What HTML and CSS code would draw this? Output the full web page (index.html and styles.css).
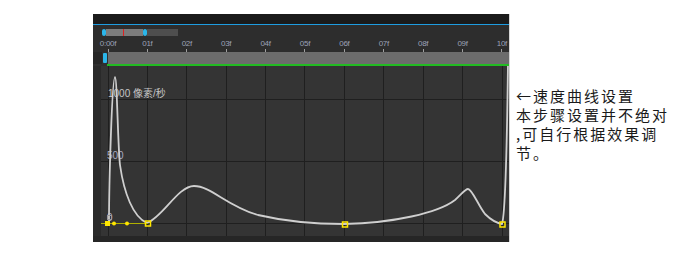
FILE: index.html
```html
<!DOCTYPE html>
<html lang="zh-CN">
<head>
    <meta charset="UTF-8">
    <title>速度曲线设置</title>
    <link rel="stylesheet" href="styles.css">
</head>
<body>

<div class="page">
    <div class="panel">
        <div class="topbar"></div>
        <div class="ruler">
            <div class="mini-scroll">
                <span class="handle"></span>
                <span class="range"><i class="playhead"></i></span>
                <span class="handle"></span>
                <span class="rest"></span>
            </div>
            <ul class="frames">
                <li>0:00f</li>
                <li>01f</li>
                <li>02f</li>
                <li>03f</li>
                <li>04f</li>
                <li>05f</li>
                <li>06f</li>
                <li>07f</li>
                <li>08f</li>
                <li>09f</li>
                <li>10f</li>
            </ul>
        </div>
        <div class="track">
            <span class="track-left"></span>
            <span class="track-handle"></span>
            <span class="track-bar"></span>
        </div>
        <div class="green-line"></div>
        <svg class="graph" width="416" height="170" viewBox="0 0 416 170">
            <rect x="0" y="0" width="8" height="170" fill="#2a2a2a"/>
            <g transform="translate(0 -1)">
                <g stroke="#1f1f1f" stroke-width="1">
                    <line x1="8" y1="34.5" x2="416" y2="34.5"/>
                    <line x1="8" y1="96.5" x2="416" y2="96.5"/>
                    <line x1="8" y1="158.5" x2="416" y2="158.5"/>
                    <line x1="15.5" y1="0" x2="15.5" y2="171"/>
                    <line x1="54.5" y1="0" x2="54.5" y2="171"/>
                    <line x1="93.5" y1="0" x2="93.5" y2="171"/>
                    <line x1="133.5" y1="0" x2="133.5" y2="171"/>
                    <line x1="172.5" y1="0" x2="172.5" y2="171"/>
                    <line x1="211.5" y1="0" x2="211.5" y2="171"/>
                    <line x1="251.5" y1="0" x2="251.5" y2="171"/>
                    <line x1="290.5" y1="0" x2="290.5" y2="171"/>
                    <line x1="330.5" y1="0" x2="330.5" y2="171"/>
                    <line x1="369.5" y1="0" x2="369.5" y2="171"/>
                    <line x1="409.5" y1="0" x2="409.5" y2="171"/>
                </g>
                <text class="axis-label" x="15" y="32">1000 像素/秒</text>
                <text class="axis-label dim" x="14" y="94">500</text>
                <text class="axis-label dim" x="14" y="156">0</text>

                <!-- speed curve -->
                <path d="M 16 157 C 16 120, 19 12, 22 12 C 24 12, 25 85, 27 100 C 31 128, 40 152, 54 158
                         C 70 152, 85 121, 101 121 C 118 121, 135 142, 165 150 C 195 157, 230 159, 251 159
                         C 300 158, 345 148, 362 135 C 368 130, 372 124, 375 124 C 379 124, 385 140, 392 149
                         C 398 155, 404 158, 409 159 C 412 150, 414 80, 415 -2"
                      fill="none" stroke="#cfcfcf" stroke-width="1.8"/>

                <!-- keyframes -->
                <line x1="8" y1="158.5" x2="55" y2="158.5" stroke="#b0b000" stroke-width="1"/>
                <rect x="14.5" y="150.5" width="4" height="4" fill="none" stroke="#9a9a9a" stroke-width="1"/>
                <rect x="12" y="156" width="5" height="5" fill="#ffe600"/>
                <circle cx="21" cy="158.5" r="2" fill="#ffe600"/>
                <circle cx="34" cy="158.5" r="2" fill="#ffe600"/>
                <rect x="52.5" y="156" width="5" height="5" fill="none" stroke="#ffe600" stroke-width="1.5"/>
                <rect x="249.5" y="157" width="5" height="5" fill="none" stroke="#ffe600" stroke-width="1.5"/>
                <rect x="407" y="157" width="5" height="5" fill="none" stroke="#ffe600" stroke-width="1.5"/>
            </g>
        </svg>
        <div class="bottombar"></div>
    </div>

    <div class="note">
        <p>←速度曲线设置</p>
        <p>本步骤设置并不绝对</p>
        <p>,可自行根据效果调</p>
        <p>节。</p>
    </div>
</div>

</body>
</html>
```

FILE: styles.css
```css
html, body, div, ul, li, p, span {
    margin: 0;
    padding: 0;
}
body {
    background-color: #ffffff;
    font-family: "Liberation Sans", "Noto Sans CJK SC", sans-serif;
}
.page {
    display: flex;
    align-items: flex-start;
    padding: 14px 0 0 93px;
}
.panel {
    width: 416px;
    display: flex;
    flex-direction: column;
    background-color: #2f2f2f;
    border-right: 1px solid #d6d6d6;
}
.topbar {
    height: 10px;
    background-color: #1b1b1b;
    border-bottom: 1px solid #1e9ce0;
}
.ruler {
    height: 27px;
    padding-top: 4px;
    box-sizing: border-box;
    background-color: #2d2d2d;
}
.mini-scroll {
    display: flex;
    width: 76px;
    height: 7px;
    margin-left: 9px;
}
.mini-scroll .handle {
    width: 4px;
    background-color: #2bb6ea;
    border-radius: 2px;
}
.mini-scroll .range {
    width: 37px;
    background-color: #7c7c7c;
    position: relative;
}
.mini-scroll .playhead {
    position: absolute;
    left: 17px;
    top: 0;
    width: 1px;
    height: 7px;
    background-color: #e02020;
}
.mini-scroll .rest {
    flex: 1;
    background-color: #4e4e4e;
}
ul.frames {
    list-style-type: none;
    display: flex;
    margin: 3px 0 0 -4.7px;
}
.frames>li {
    flex: none;
    width: 39.4px;
    text-align: center;
    font-size: 8px;
    line-height: 9px;
    color: #9ca1b6;
    letter-spacing: -0.3px;
}
.frames>li::after {
    content: "";
    display: block;
    width: 1px;
    height: 3px;
    margin: 1px auto 0;
    background-color: #a0a0a0;
}
.track {
    display: flex;
    height: 12px;
}
.track-left {
    width: 9px;
    background-color: #262626;
}
.track-handle {
    width: 4px;
    margin: 1px 1px;
    background-color: #2bb6ea;
    border-radius: 1px;
}
.track-bar {
    flex: 1;
    background-color: #6c6c6c;
}
.green-line {
    height: 2px;
    margin-left: 14px;
    background-color: #22bb22;
}
.graph {
    display: block;
    background-color: #343434;
}
.axis-label {
    font-family: "Liberation Sans", "Noto Sans CJK SC", sans-serif;
    font-size: 10px;
    fill: #c6c6c6;
}
.axis-label.dim {
    fill: #a9a9c0;
}
.bottombar {
    height: 6px;
    background-color: #262626;
}
.note {
    margin-left: 6px;
    padding-top: 72px;
    font-family: "Noto Sans CJK SC", sans-serif;
    font-size: 15px;
    line-height: 19px;
    letter-spacing: 2px;
    color: #1a1a1a;
}
```
